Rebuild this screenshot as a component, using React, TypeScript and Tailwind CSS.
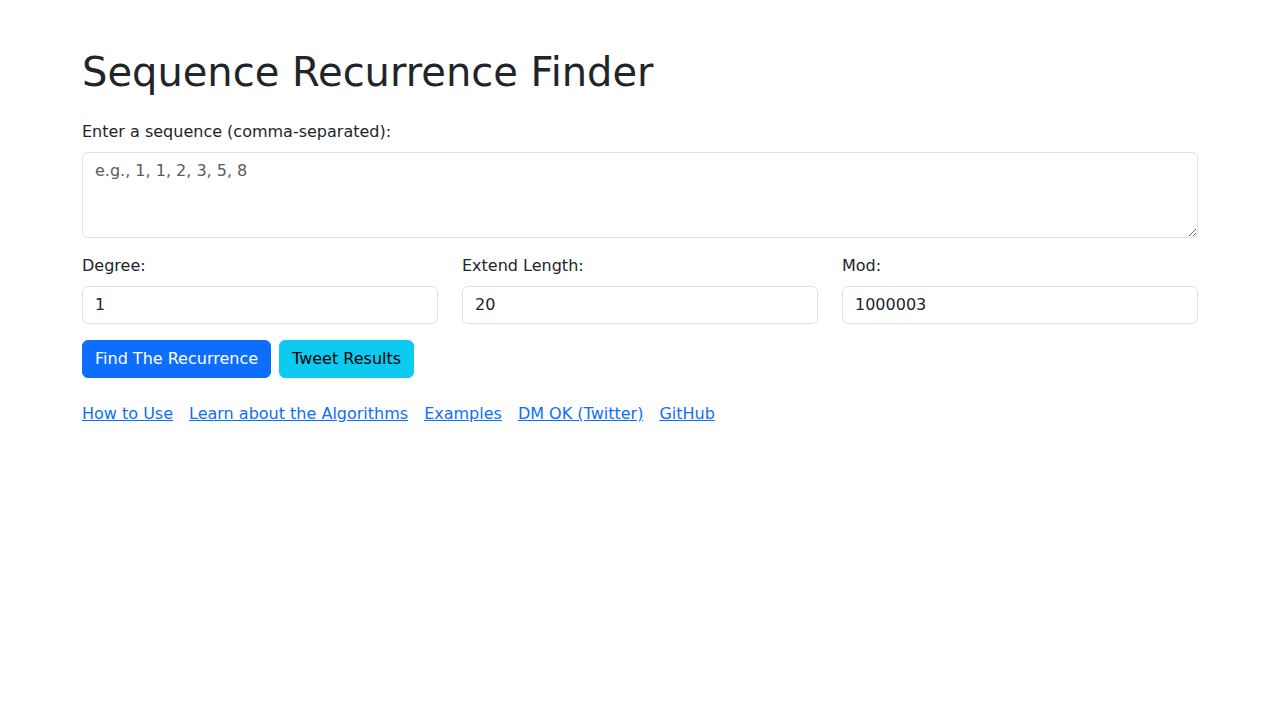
import { useState } from "react";

const font = "font-['DejaVu_Sans','Liberation_Sans',sans-serif]";
const inputCls =
  "block w-full rounded-[6px] border border-[#dee2e6] bg-white px-3 py-[6px] text-base leading-6 text-[#212529] outline-none placeholder:text-[#595c5f]";

export default function App() {
  const [seq, setSeq] = useState("");
  const [degree, setDegree] = useState("1");
  const [len, setLen] = useState("20");
  const [mod, setMod] = useState("1000003");

  const links = ["How to Use", "Learn about the Algorithms", "Examples", "DM OK (Twitter)", "GitHub"];

  return (
    <div className={`min-h-screen bg-white pt-12 text-[#212529] ${font}`}>
      <div className="mx-auto w-[1140px] px-3">
        <h1 className="mb-6 text-[40px] font-medium leading-[48px]">Sequence Recurrence Finder</h1>

        <div className="mb-4">
          <label className="mb-2 block text-base leading-6">Enter a sequence (comma-separated):</label>
          <textarea
            rows={3}
            value={seq}
            onChange={(e) => setSeq(e.target.value)}
            placeholder="e.g., 1, 1, 2, 3, 5, 8"
            className={inputCls}
          />
        </div>

        <div className="mb-4 grid grid-cols-3 gap-6">
          <div>
            <label className="mb-2 block leading-6">Degree:</label>
            <input value={degree} onChange={(e) => setDegree(e.target.value)} className={inputCls} />
          </div>
          <div>
            <label className="mb-2 block leading-6">Extend Length:</label>
            <input value={len} onChange={(e) => setLen(e.target.value)} className={inputCls} />
          </div>
          <div>
            <label className="mb-2 block leading-6">Mod:</label>
            <input value={mod} onChange={(e) => setMod(e.target.value)} className={inputCls} />
          </div>
        </div>

        <div className="flex gap-2">
          <button className="rounded-[6px] border border-[#0d6efd] bg-[#0d6efd] px-3 py-[6px] leading-6 text-white">
            Find The Recurrence
          </button>
          <button className="rounded-[6px] border border-[#0dcaf0] bg-[#0dcaf0] px-3 py-[6px] leading-6 text-black">
            Tweet Results
          </button>
        </div>

        <div className="mt-6 flex gap-4 leading-6">
          {links.map((l) => (
            <a key={l} href="#" className="text-[#0d6efd] underline">
              {l}
            </a>
          ))}
        </div>
      </div>
    </div>
  );
}
